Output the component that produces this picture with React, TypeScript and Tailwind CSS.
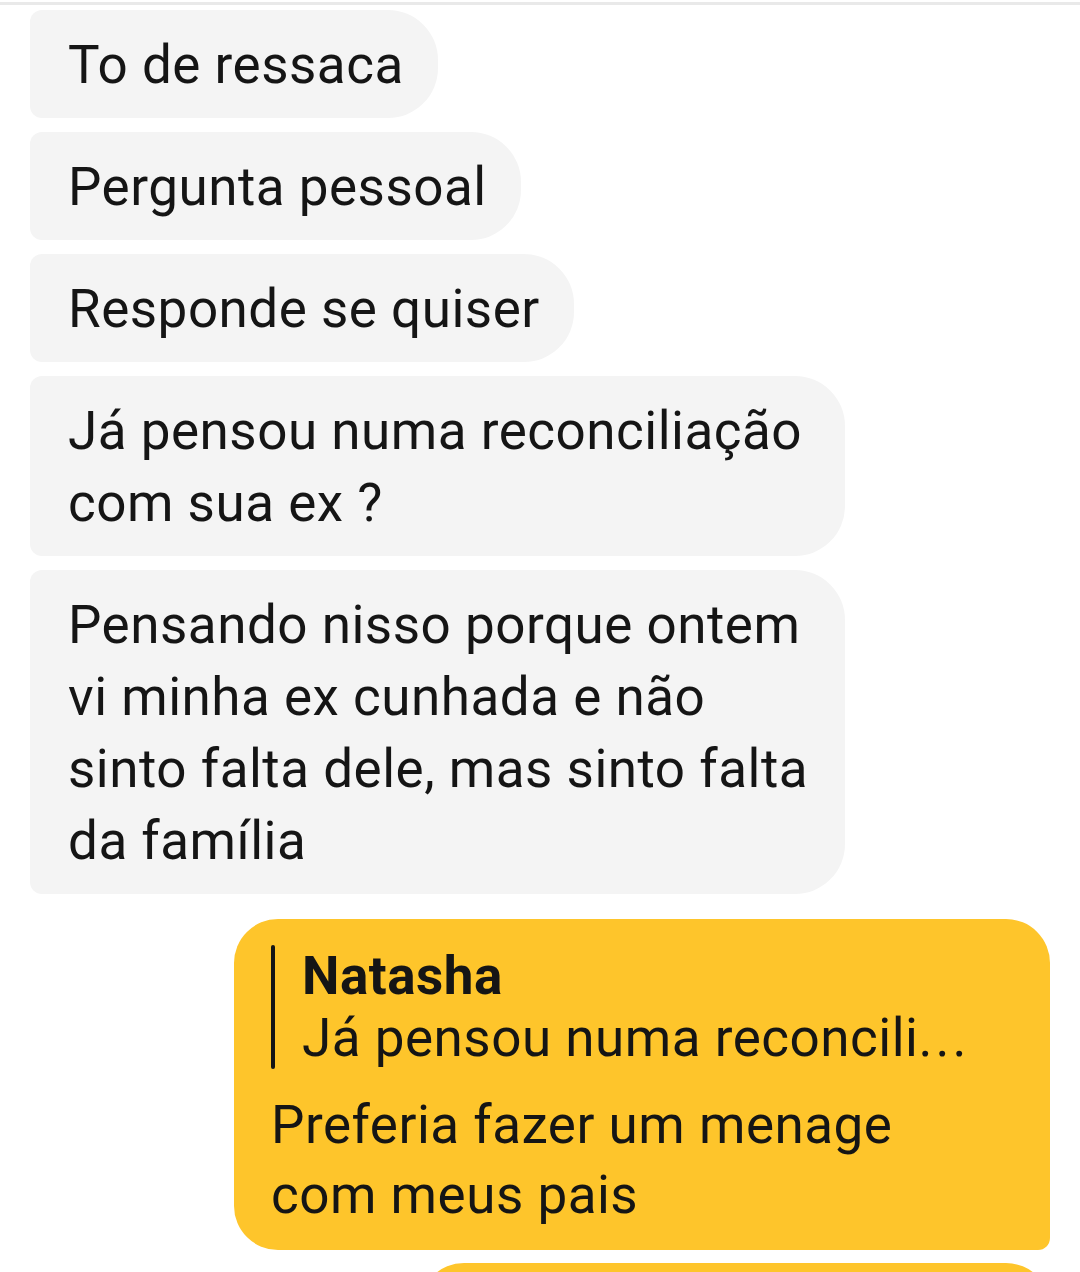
const incoming: string[][] = [
  ['To de ressaca'],
  ['Pergunta pessoal'],
  ['Responde se quiser'],
  ['Já pensou numa reconciliação', 'com sua ex ?'],
  ['Pensando nisso porque ontem', 'vi minha ex cunhada e não', 'sinto falta dele, mas sinto falta', 'da família'],
];

function IncomingBubble({ lines }: { lines: string[] }) {
  const wide = lines.length > 1;
  return (
    <div
      className={`bg-[#f4f4f4] rounded-l-[12px] rounded-r-[50px] pl-[38px] pr-[34px] pt-[19px] pb-[17px] ${
        wide ? 'w-[815px]' : 'w-fit'
      }`}
    >
      {lines.map((l, i) => (
        <div key={i} className="leading-[72px] whitespace-nowrap">
          {l}
        </div>
      ))}
    </div>
  );
}

export default function App() {
  return (
    <div className="h-[1272px] w-[1080px] overflow-hidden bg-white text-[#151515] font-['Roboto',sans-serif] text-[53px] tracking-[0.5px]">
      <div className="mt-[2px] h-[3px] bg-[#e9e9e9]" />

      <div className="flex flex-col items-start gap-[14px] pl-[30px] pt-[5px]">
        {incoming.map((lines, i) => (
          <IncomingBubble key={i} lines={lines} />
        ))}
      </div>

      <div className="flex flex-col items-end gap-[13px] pr-[30px] pt-[25px]">
        <div className="w-[816px] bg-[#fec52b] rounded-tl-[44px] rounded-tr-[44px] rounded-bl-[44px] rounded-br-[12px] pl-[37px] pr-[30px] pt-[26px] pb-[20px]">
          <div className="flex gap-[27px]">
            <div className="w-[4px] rounded-full bg-[#151515]" />
            <div>
              <div className="leading-[62px] font-bold">Natasha</div>
              <div className="leading-[62px] whitespace-nowrap">
                Já pensou numa reconcili<span className="tracking-[3px]">...</span>
              </div>
            </div>
          </div>
          <div className="mt-[21px]">
            <div className="leading-[70px]">Preferia fazer um menage</div>
            <div className="leading-[70px]">com meus pais</div>
          </div>
        </div>

        <div className="w-[630px] h-[120px] bg-[#fec52b] rounded-t-[44px]" />
      </div>
    </div>
  );
}
